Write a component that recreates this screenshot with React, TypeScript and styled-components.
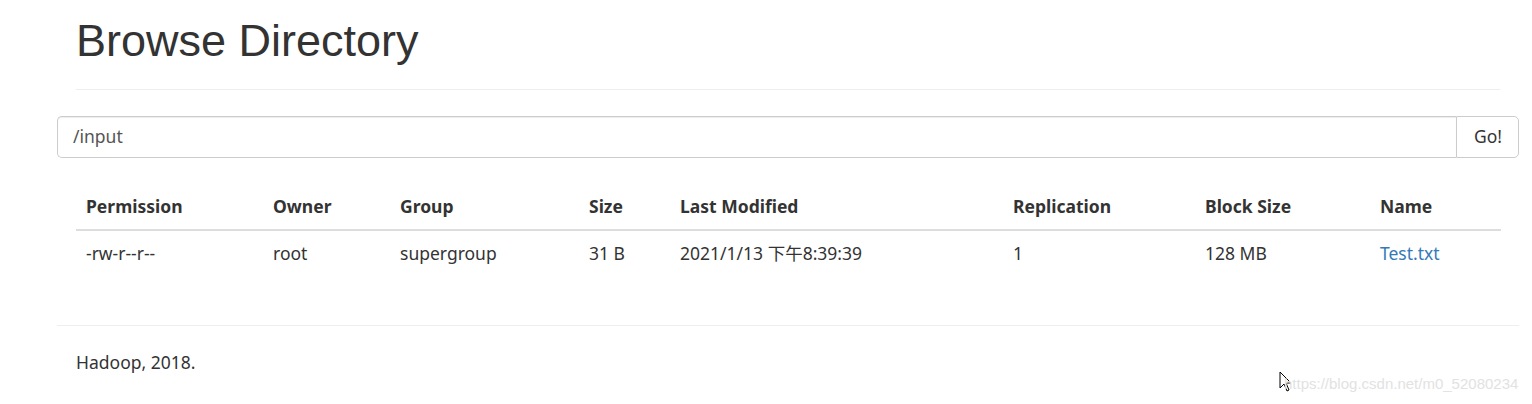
import styled, { createGlobalStyle } from 'styled-components';

const GlobalStyle = createGlobalStyle`
  html, body {
    margin: 0;
    padding: 0;
    background: #fff;
  }
  body {
    font-family: 'Noto Sans', 'Noto Sans CJK SC', sans-serif;
    font-size: 17.5px;
    line-height: 1.42857;
    color: #333;
  }
`;

type TColumn = {
  title: string;
  width: number;
};

const columns: TColumn[] = [
  { title: 'Permission', width: 187 },
  { title: 'Owner', width: 127 },
  { title: 'Group', width: 189 },
  { title: 'Size', width: 91 },
  { title: 'Last Modified', width: 333 },
  { title: 'Replication', width: 192 },
  { title: 'Block Size', width: 175 },
  { title: 'Name', width: 131 },
];

const rows = [
  ['-rw-r--r--', 'root', 'supergroup', '31 B', '2021/1/13 下午8:39:39', '1', '128 MB', 'Test.txt'],
];

const App = () => {
  return (
    <Page>
      <GlobalStyle />
      <Container>
        <Inner>
          <PageHeader>
            <Title>Browse Directory</Title>
          </PageHeader>
        </Inner>
        <SearchGroup>
          <PathInput type="text" defaultValue="/input" />
          <GoButton type="button">Go!</GoButton>
        </SearchGroup>
        <Inner>
          <Table>
            <colgroup>
              {columns.map((c) => (
                <col key={c.title} style={{ width: c.width }} />
              ))}
            </colgroup>
            <thead>
              <tr>
                {columns.map((c) => (
                  <Th key={c.title}>{c.title}</Th>
                ))}
              </tr>
            </thead>
            <tbody>
              {rows.map((row) => (
                <tr key={row[7]}>
                  {row.map((cell, i) => (
                    <Td key={i}>{i === 7 ? <FileLink href="#">{cell}</FileLink> : cell}</Td>
                  ))}
                </tr>
              ))}
            </tbody>
          </Table>
        </Inner>
        <Divider />
        <Inner>
          <FooterText>Hadoop, 2018.</FooterText>
        </Inner>
      </Container>
      <Cursor width="14" height="22" viewBox="0 0 14 22">
        <path d="M1 1 L1 17 L5 13 L8 20 L10 19 L7 12 L12 12 Z" fill="#fff" stroke="#000" strokeWidth="1" />
      </Cursor>
      <Watermark>https://blog.csdn.net/m0_52080234</Watermark>
    </Page>
  );
};

export default App;

const Page = styled.div`
  position: relative;
  width: 1532px;
  height: 404px;
  overflow: hidden;
`;

const Container = styled.div`
  width: 1462px;
  margin-left: 57px;
`;

const Inner = styled.div`
  padding: 0 19px;
`;

const PageHeader = styled.div`
  padding: 16px 0 11px;
  margin-bottom: 26px;
  border-bottom: 1px solid #eee;
`;

const Title = styled.h1`
  margin: 0 0 12px;
  font-family: 'Liberation Sans', Arial, sans-serif;
  font-size: 45px;
  font-weight: 500;
  line-height: 1.1;
  color: #333;
`;

const SearchGroup = styled.div`
  display: flex;
  height: 42px;
  margin-bottom: 26px;
`;

const PathInput = styled.input`
  flex: 1;
  box-sizing: border-box;
  height: 42px;
  padding: 0 15px 2px;
  border: 1px solid #ccc;
  border-right: 0;
  border-radius: 5px 0 0 5px;
  box-shadow: inset 0 1px 1px rgba(0, 0, 0, 0.075);
  font-family: inherit;
  font-size: 17.5px;
  color: #555;
  outline: none;
`;

const GoButton = styled.button`
  box-sizing: border-box;
  height: 42px;
  padding: 0 16px 2px 17px;
  border: 1px solid #ccc;
  border-radius: 0 5px 5px 0;
  background: #fff;
  font-family: inherit;
  font-size: 17.5px;
  color: #333;
`;

const Table = styled.table`
  width: 100%;
  table-layout: fixed;
  border-collapse: collapse;
  border-spacing: 0;
`;

const Th = styled.th`
  padding: 10px;
  text-align: left;
  font-weight: 700;
  line-height: 25px;
  border-bottom: 2.5px solid #ddd;
`;

const Td = styled.td`
  padding: 10px;
  line-height: 25px;
  white-space: nowrap;
`;

const FileLink = styled.a`
  color: #337ab7;
  text-decoration: none;
`;

const Divider = styled.hr`
  margin: 49px 0 24px;
  border: 0;
  border-top: 1px solid #eee;
`;

const FooterText = styled.p`
  margin: 0;
  line-height: 25px;
`;

const Cursor = styled.svg`
  position: absolute;
  left: 1279px;
  top: 371px;
`;

const Watermark = styled.div`
  position: absolute;
  left: 1284px;
  top: 373px;
  font-family: 'Liberation Sans', Arial, sans-serif;
  font-size: 15px;
  color: #e2e2e2;
`;
